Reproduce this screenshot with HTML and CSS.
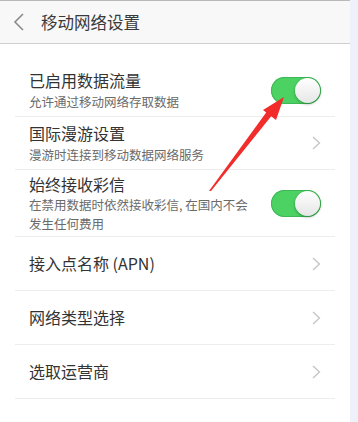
FILE: index.html
```html
<!DOCTYPE html>
<html lang="zh-CN">
<head>
<meta charset="utf-8">
<link rel="stylesheet" href="styles.css">
</head>
<body>
<div class="screen">
  <div class="panel">
    <header class="bar">
      <svg class="back" width="12" height="18" viewBox="0 0 12 18"><path d="M10 1 L2 9 L10 17" fill="none" stroke="#8a8a8a" stroke-width="1.6"/></svg>
      <span class="bar-title">移动网络设置</span>
    </header>
    <ul class="list">
      <li class="row two">
        <div class="text">
          <div class="title">已启用数据流量</div>
          <div class="sub">允许通过移动网络存取数据</div>
        </div>
        <span class="toggle"><span class="knob"></span></span>
      </li>
      <li class="row two">
        <div class="text">
          <div class="title">国际漫游设置</div>
          <div class="sub">漫游时连接到移动数据网络服务</div>
        </div>
        <svg class="chev" width="9" height="14" viewBox="0 0 9 14"><path d="M1 1 L7.5 7 L1 13" fill="none" stroke="#c4c4c4" stroke-width="1.3"/></svg>
      </li>
      <li class="row three">
        <div class="text">
          <div class="title">始终接收彩信</div>
          <div class="sub">在禁用数据时依然接收彩信, 在国内不会发生任何费用</div>
        </div>
        <span class="toggle"><span class="knob"></span></span>
      </li>
      <li class="row one">
        <div class="text"><div class="title">接入点名称 (APN)</div></div>
        <svg class="chev" width="9" height="14" viewBox="0 0 9 14"><path d="M1 1 L7.5 7 L1 13" fill="none" stroke="#c4c4c4" stroke-width="1.3"/></svg>
      </li>
      <li class="row one">
        <div class="text"><div class="title">网络类型选择</div></div>
        <svg class="chev" width="9" height="14" viewBox="0 0 9 14"><path d="M1 1 L7.5 7 L1 13" fill="none" stroke="#c4c4c4" stroke-width="1.3"/></svg>
      </li>
      <li class="row one">
        <div class="text"><div class="title">选取运营商</div></div>
        <svg class="chev" width="9" height="14" viewBox="0 0 9 14"><path d="M1 1 L7.5 7 L1 13" fill="none" stroke="#c4c4c4" stroke-width="1.3"/></svg>
      </li>
    </ul>
  </div>
  <div class="strip"></div>
  <svg class="arrow" width="358" height="422" viewBox="0 0 358 422">
    <polygon points="209,191 211,191 273,114 268,110" fill="#f22b2b"/>
    <polygon points="284,97 263,110 276,120" fill="#f22b2b"/>
  </svg>
</div>
</body>
</html>
```
FILE: styles.css
```css
html, body {
  margin: 0;
  padding: 0;
  background: #ffffff;
}
body {
  font-family: "Noto Sans CJK SC", "Noto Sans", sans-serif;
  color: #333333;
}
.screen {
  position: relative;
  display: flex;
  width: 358px;
  height: 422px;
  overflow: hidden;
}
.panel {
  width: 350px;
  background: #ffffff;
}
.strip {
  width: 8px;
  background: #eef1f9;
}
.bar {
  height: 42px;
  background: #f8f8f8;
  border-top: 1px solid #b9b9b9;
  border-bottom: 1px solid #cfcfcf;
  display: flex;
  align-items: center;
  padding-left: 13px;
}
.back {
  display: block;
}
.bar-title {
  margin-left: 16px;
  font-size: 16.5px;
  color: #3a3a3a;
}
.list {
  list-style: none;
  margin: 0;
  padding: 20px 0 0 0;
}
.row {
  margin: 0 15px;
  padding: 0 14px;
  border-bottom: 1px solid #ededed;
  display: flex;
  align-items: center;
  gap: 16px;
  box-sizing: border-box;
}
.row.two { height: 53px; }
.row.three { height: 67px; }
.row.one { height: 54px; }
.text {
  flex: 1;
  min-width: 0;
}
.title {
  font-size: 16px;
  line-height: 1.45;
  color: #333333;
}
.sub {
  font-size: 12.5px;
  line-height: 1.45;
  color: #6a6a6a;
}
.chev {
  display: block;
}
.toggle {
  position: relative;
  width: 50px;
  height: 27px;
  border-radius: 14px;
  background: #4cd263;
  box-shadow: inset 0 0 0 1px #3fb755;
  flex: none;
}
.knob {
  position: absolute;
  right: 1px;
  top: 1px;
  width: 25px;
  height: 25px;
  border-radius: 50%;
  background: linear-gradient(#ffffff, #e6e6e6);
  box-shadow: 0 1px 3px rgba(0,0,0,0.35);
}
.arrow {
  position: absolute;
  left: 0;
  top: 0;
  pointer-events: none;
}
```
